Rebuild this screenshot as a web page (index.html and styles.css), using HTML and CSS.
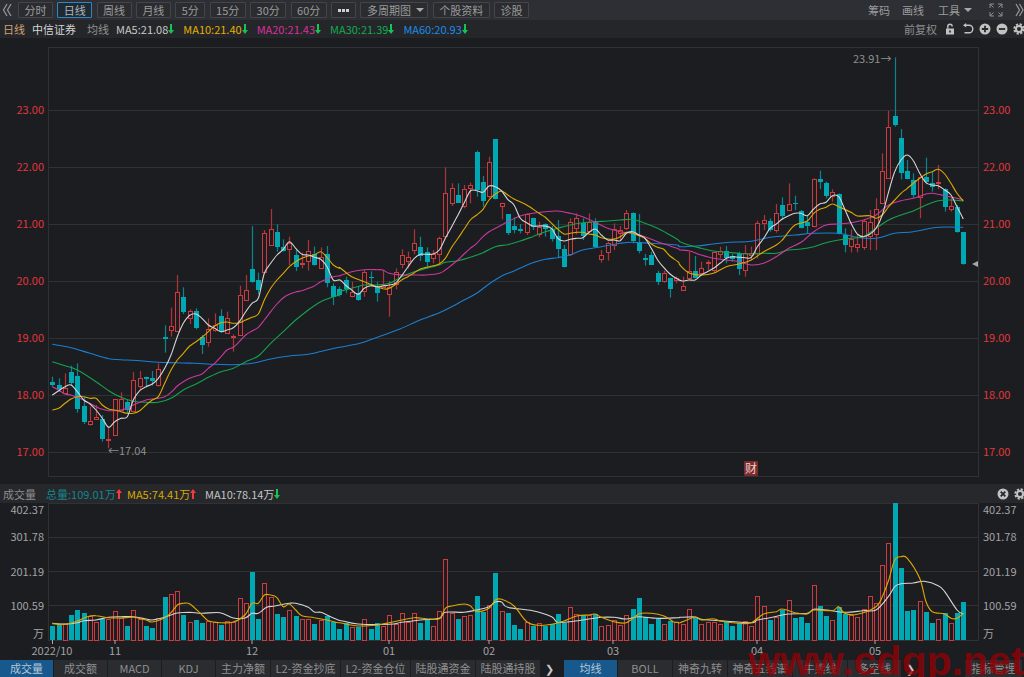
FILE: index.html
```html
<!DOCTYPE html>
<html lang="zh-CN">
<head>
<meta charset="utf-8">
<title>中信证券 日线</title>
<link rel="stylesheet" href="styles.css">
</head>
<body>
<div class="app">
  <header class="toolbar">
    <svg class="chev" viewBox="0 0 10 16" width="10" height="16"><path d="M5 2L1.5 8L5 14M9 2L5.5 8L9 14"/></svg>
    <button class="btn">分时</button>
    <button class="btn btn-active">日线</button>
    <button class="btn">周线</button>
    <button class="btn">月线</button>
    <button class="btn">5分</button>
    <button class="btn">15分</button>
    <button class="btn">30分</button>
    <button class="btn">60分</button>
    <button class="btn btn-dots" aria-label="更多"><svg class="dots" viewBox="0 0 11 3" width="11" height="3"><path d="M0 0h3v3H0zM4 0h3v3H4zM8 0h3v3H8z"/></svg></button>
    <button class="btn btn-caret">多周期图<i class="caret"></i></button>
    <button class="btn">个股资料</button>
    <button class="btn">诊股</button>
    <div class="tool-right">
      <span>筹码</span>
      <span>画线</span>
      <span class="tool-menu">工具<i class="caret"></i></span>
      <svg class="ico-expand" viewBox="0 0 14 14" width="14" height="14"><path d="M1 5V1h4M9 1h4v4M13 9v4H9M5 13H1V9M1 1l3.5 3.5M13 1L9.5 4.5M13 13L9.5 9.5M1 13l3.5-3.5"/></svg>
      <svg class="chev chev-right" viewBox="0 0 9 16" width="9" height="16"><path d="M1 2L4.5 8L1 14M4.5 2L8 8L4.5 14"/></svg>
    </div>
  </header>

  <div class="legend">
    <span class="tag-period">日线</span>
    <span class="tag-name">中信证券</span>
    <span class="tag-ma">均线</span>
    <span class="ma c-white">MA5:21.08<i class="arr arr-down"></i></span>
    <span class="ma c-yellow">MA10:21.40<i class="arr arr-down"></i></span>
    <span class="ma c-magenta">MA20:21.43<i class="arr arr-down"></i></span>
    <span class="ma c-green">MA30:21.39<i class="arr arr-down"></i></span>
    <span class="ma c-blue">MA60:20.93<i class="arr arr-down"></i></span>
    <div class="legend-right">
      <span class="fq">前复权</span>
      <svg class="ico ico-lock" viewBox="0 0 12 12" width="12" height="12"><path class="fill" d="M2 5.5h8v6H2z"/><path class="line" d="M3.8 5.5V3.4a2.2 2.2 0 0 1 4.4 0"/><rect class="hole" x="5.2" y="7.5" width="1.6" height="2"/></svg>
      <svg class="ico" viewBox="0 0 12 12" width="12" height="12"><path class="line" d="M3 2.2h4a3.6 3.6 0 0 1 0 7.6H2.5"/><path class="fill" d="M4.2 0v4.4L1 2.2z"/></svg>
      <svg class="ico" viewBox="0 0 12 12" width="12" height="12"><circle class="fill" cx="6" cy="6" r="5.5"/><path class="hole-line" d="M6 2.8v6.4M2.8 6h6.4"/></svg>
      <svg class="ico" viewBox="0 0 12 12" width="12" height="12"><circle class="fill" cx="6" cy="6" r="5.5"/><path class="hole-line" d="M2.8 6h6.4"/></svg>
      <svg class="ico" viewBox="0 0 12 12" width="12" height="12"><circle class="gear-teeth" cx="6" cy="6" r="4.7"/><circle class="gear-ring" cx="6" cy="6" r="3"/></svg>
    </div>
  </div>

  <svg id="price" class="pane pane-price" viewBox="0 38 1024 446" width="1024" height="446">
    <g class="grid">
      <path d="M48 47H978V476H48Z"/>
      <path d="M48 110H978M48 167H978M48 224H978M48 281H978M48 338H978M48 395H978M48 452H978"/>
    </g>
    <g id="candles"></g>
    <g id="malines"></g>
    <g class="axis-red">
      <text x="44" y="114" text-anchor="end">23.00</text>
      <text x="44" y="171" text-anchor="end">22.00</text>
      <text x="44" y="228" text-anchor="end">21.00</text>
      <text x="44" y="285" text-anchor="end">20.00</text>
      <text x="44" y="342" text-anchor="end">19.00</text>
      <text x="44" y="399" text-anchor="end">18.00</text>
      <text x="44" y="456" text-anchor="end">17.00</text>
      <text x="983" y="114">23.00</text>
      <text x="983" y="171">22.00</text>
      <text x="983" y="228">21.00</text>
      <text x="983" y="285">20.00</text>
      <text x="983" y="342">19.00</text>
      <text x="983" y="399">18.00</text>
      <text x="983" y="456">17.00</text>
    </g>
    <text class="note" x="108" y="455">←17.04</text>
    <text class="note" x="853" y="63">23.91→</text>
    <path class="mark" d="M972 264l6-3v6z"/>
    <rect class="cai-box" x="744" y="461" width="14" height="15" rx="1"/>
    <text class="cai" x="751" y="473" text-anchor="middle">财</text>
  </svg>

  <div class="vol-head">
    <span class="vol-name">成交量</span>
    <span class="vol-total">总量:109.01万<i class="arr arr-up"></i></span>
    <span class="vol-ma5">MA5:74.41万<i class="arr arr-up"></i></span>
    <span class="vol-ma10">MA10:78.14万<i class="arr arr-down"></i></span>
    <div class="vol-right">
      <svg class="ico" viewBox="0 0 12 12" width="12" height="12"><circle class="fill" cx="6" cy="6" r="5.5"/><path class="hole-line" d="M3.7 3.7l4.6 4.6M8.3 3.7l-4.6 4.6"/></svg>
      <svg class="ico" viewBox="0 0 12 12" width="12" height="12"><circle class="gear-teeth" cx="6" cy="6" r="4.7"/><circle class="gear-ring" cx="6" cy="6" r="3"/></svg>
    </div>
  </div>

  <svg id="volume" class="pane pane-vol" viewBox="0 503 1024 157" width="1024" height="157">
    <g class="grid">
      <path d="M48 503.5H978V640.5H48Z"/>
      <path d="M48 537.5H978M48 571.5H978M48 605.5H978"/>
    </g>
    <g id="bars"></g>
    <g id="vollines"></g>
    <g class="axis-gray">
      <text x="44" y="514" text-anchor="end">402.37</text>
      <text x="44" y="541" text-anchor="end">301.78</text>
      <text x="44" y="576" text-anchor="end">201.19</text>
      <text x="44" y="610" text-anchor="end">100.59</text>
      <text x="44" y="638" text-anchor="end">万</text>
      <text x="983" y="514">402.37</text>
      <text x="983" y="541">301.78</text>
      <text x="983" y="576">201.19</text>
      <text x="983" y="610">100.59</text>
      <text x="983" y="638">万</text>
      <text x="52" y="655" text-anchor="middle">2022/10</text>
      <text x="115" y="655" text-anchor="middle">11</text>
      <text x="252" y="655" text-anchor="middle">12</text>
      <text x="389" y="655" text-anchor="middle">01</text>
      <text x="489" y="655" text-anchor="middle">02</text>
      <text x="613" y="655" text-anchor="middle">03</text>
      <text x="757" y="655" text-anchor="middle">04</text>
      <text x="875" y="655" text-anchor="middle">05</text>
    </g>
    <path class="ticks" d="M52.5 640v4M115 640v4M252 640v4M389 640v4M489 640v4M613 640v4M757 640v4M875 640v4"/>
  </svg>

  <nav class="tabs">
    <span class="tab tab-active">成交量</span>
    <span class="tab">成交额</span>
    <span class="tab">MACD</span>
    <span class="tab">KDJ</span>
    <span class="tab tab-w">主力净额</span>
    <span class="tab tab-l2">L2-资金抄底</span>
    <span class="tab tab-l2">L2-资金仓位</span>
    <span class="tab tab-lg">陆股通资金</span>
    <span class="tab tab-lg">陆股通持股</span>
    <span class="tab-next">❯</span>
    <span class="tab tab-active">均线</span>
    <span class="tab tab-w">BOLL</span>
    <span class="tab tab-w">神奇九转</span>
    <span class="tab tab-lg">神奇五线谱</span>
    <span class="tab tab-w">牛熊线</span>
    <span class="tab">多空线</span>
    <span class="tab-next">❯</span>
    <span class="tab tab-manage">指标管理</span>
  </nav>

  <div class="watermark">www.cdgp.net</div>
</div>
<script src="chart.js"></script>
</body>
</html>
```

FILE: styles.css
```css
* { box-sizing: border-box; }
html, body { margin: 0; padding: 0; height: 100%; background: #1c1d21; overflow: hidden; }
body { font-family: "Noto Sans CJK SC", "Liberation Sans", sans-serif; font-size: 11px; color: #9b9b9b; }
.app { position: relative; width: 1024px; height: 677px; display: flex; flex-direction: column; overflow: hidden; }

.toolbar { height: 20px; flex: none; display: flex; align-items: center; gap: 4.3px; background: #2d2f34; padding-left: 2px; }
.chev { flex: none; fill: none; stroke: #9a9a9a; stroke-width: 1.2; margin-right: 1.7px; }
.btn { height: 16px; padding: 0 5.5px; font: inherit; line-height: 14px; color: #9b9b9b; background: #2a2c30; border: 1px solid #43454a; border-radius: 1px; display: flex; align-items: center; gap: 5px; white-space: nowrap; }
.btn-active { color: #aeb6bc; background: #202a33; border-color: #2f86c5; }
.btn-dots { width: 25px; justify-content: center; padding: 0; }
.dots { fill: #d0d0d0; }
.btn-caret { width: 68px; }
.caret { display: inline-block; width: 0; height: 0; border: 4px solid transparent; border-top: 4px solid #a8a8a8; border-bottom: 0; }
.tool-right { margin-left: auto; display: flex; align-items: center; gap: 12px; color: #9b9b9b; }
.tool-menu { display: flex; align-items: center; gap: 4px; margin-left: 2px; margin-right: 5px; }
.ico-expand { fill: none; stroke: #8f8f8f; stroke-width: 1; }
.chev-right { margin: 0; }

.legend { height: 18px; flex: none; display: flex; align-items: center; background: #24262a; padding-left: 3px; }
.tag-period { color: #cfa274; width: 29px; }
.tag-name { color: #d4d4d4; width: 55px; }
.tag-ma { color: #929292; width: 29px; }
.ma { display: flex; align-items: center; margin-right: 9px; }
.c-white { color: #c9c9c9; }
.c-yellow { color: #e6b000; }
.c-magenta { color: #db2f9c; }
.c-green { color: #12ab50; }
.c-blue { color: #1c8ce6; }
.arr { display: inline-block; flex: none; width: 6px; height: 10px; position: relative; }
.arr::before { content: ""; position: absolute; left: 2px; width: 2px; height: 7px; }
.arr::after { content: ""; position: absolute; left: 0; width: 0; height: 0; border-left: 3px solid transparent; border-right: 3px solid transparent; }
.arr-down::before { top: 0; background: #14c455; }
.arr-down::after { bottom: 0; border-top: 4px solid #14c455; }
.arr-up::before { bottom: 0; background: #f53a3e; }
.arr-up::after { top: 0; border-bottom: 4px solid #f53a3e; }
.legend-right { margin-left: auto; display: flex; align-items: center; gap: 5px; margin-right: -1px; }
.fq { color: #8f8f8f; margin-right: 2px; }
.ico { flex: none; }
.ico-lock { margin-right: 1px; }
.ico .fill { fill: #c2c2c2; }
.ico .line { fill: none; stroke: #c2c2c2; stroke-width: 1.4; }
.ico .hole { fill: #24262a; }
.ico .hole-line { fill: none; stroke: #26282c; stroke-width: 1.8; }
.ico .gear-teeth { fill: none; stroke: #c2c2c2; stroke-width: 2; stroke-dasharray: 2.2 1.5; }
.ico .gear-ring { fill: none; stroke: #c2c2c2; stroke-width: 2; }

.pane { display: block; flex: none; overflow: visible; font-family: "Noto Sans CJK SC", "Liberation Sans", sans-serif; font-size: 11px; }
.grid path { fill: none; stroke: #2f3135; stroke-width: 1; shape-rendering: crispEdges; }
.axis-red text { fill: #e1373a; }
.axis-gray text { fill: #a3a3a3; }
.note { fill: #8e8e8e; font-size: 11px; }
.mark { fill: #a8a8a8; }
.cai-box { fill: #7c2b2b; }
.cai { fill: #e3cfcf; font-size: 12px; }
.ticks { stroke: #a8a8a8; fill: none; }
.wick-up { stroke: #ad3337; stroke-width: 1.2; }
.wick-down { stroke: #0a8590; stroke-width: 1.2; }
.body-up { fill: #1c1d21; stroke: #cf3a3f; stroke-width: 1; shape-rendering: crispEdges; }
.body-down { fill: #00a8b4; shape-rendering: crispEdges; }
.ma-line { fill: none; stroke-width: 1.1; stroke-linejoin: round; }
.s-white { stroke: #d5d5d5; }
.s-yellow { stroke: #dca900; }
.s-magenta { stroke: #c93a9c; }
.s-green { stroke: #15a24e; }
.s-blue { stroke: #1b7fd0; }

.vol-head { height: 19px; flex: none; display: flex; align-items: center; background: #26282c; padding-left: 3px; }
.vol-name { color: #8f8f8f; width: 43px; }
.vol-total { color: #16858e; display: flex; align-items: center; width: 81px; }
.vol-ma5 { color: #dba800; display: flex; align-items: center; width: 78px; }
.vol-ma10 { color: #c4c4c4; display: flex; align-items: center; }
.vol-right { margin-left: auto; display: flex; gap: 5px; margin-right: -2px; }

.tabs { height: 17px; flex: none; display: flex; align-items: stretch; background: #1c1d21; }
.tab { width: 54px; text-align: center; line-height: 16px; background: #2a2c30; color: #8f8f8f; border-right: 1px solid #1c1d21; white-space: nowrap; }
.tab-active { background: #17598c; color: #b6c6d4; }
.tab-w { width: 55px; }
.tab-l2 { width: 70px; }
.tab-lg { width: 65px; }
.tab-next { width: 23px; line-height: 16px; padding-left: 4px; color: #c8c8c8; }
.tab-manage { width: 58px; margin-left: auto; margin-right: 1px; }

.watermark { position: absolute; left: 748px; top: 637px; font-family: "Liberation Sans", sans-serif; font-size: 41px; line-height: 48px; font-weight: bold; color: rgba(146, 2, 6, .8); white-space: nowrap; pointer-events: none; }
```

FILE: chart.js
```js
var NS = "http://www.w3.org/2000/svg";
function el(parent, name, attrs) {
  var n = document.createElementNS(NS, name);
  for (var k in attrs) n.setAttribute(k, attrs[k]);
  parent.appendChild(n);
  return n;
}
function cx(i) { return 52.33 + 6.24 * i; }

// [up(1)/down(0), wick top, body top, body bottom, wick bottom] in crop coordinates
var A = [[0,530,545,555,560],[0,535,555,568,575],[1,520,563,578,580],[0,497,516,550,555],[0,490,527,625,638],[0,590,618,665,672],[1,620,664,673,677],[1,615,650,656,657],[0,645,657,718,725],[1,680,717,720,745],[1,598,598,707,707],[1,577,598,632,632],[0,600,607,632,640],[1,516,540,632,635],[1,513,535,558,570],[0,530,532,537,562],[0,513,534,543,557],[1,490,508,557,560],[0,376,412,418,458],[1,323,377,388,410],[1,225,276,394,395],[0,262,292,338,342],[1,328,332,352,372],[0,325,334,386,388],[0,405,412,437,462],[1,355,386,425,440],[1,340,376,392,395],[0,328,348,395,398],[1,335,353,397,400],[1,403,408,412,455],[1,257,286,405,405],[1,225,271,302,303],[0,78,208,248,248],[0,218,241,272,283],[1,90,100,217,218],[1,27,88,135,137],[0,73,96,142,155],[0,118,140,153,155],[1,110,130,148,195],[0,150,166,202,213],[1,158,188,190,205],[1,120,152,182,212],[0,140,163,197,197],[1,142,172,206,208],[0,138,163,250,262],[0,250,257,290,315]];
var B = [[0,470,478,497,500],[0,440,450,476,490],[1,455,485,497,502],[0,468,490,510,512],[1,420,427,485,500],[0,424,440,444,470],[0,455,472,490,515],[1,420,465,470,470],[1,453,470,490,560],[1,415,425,460,478],[1,358,376,402,415],[1,365,382,394,415],[1,298,340,360,373],[0,320,350,378,393],[0,352,365,394,415],[1,360,373,385,400],[1,320,323,372,405],[1,112,190,320,320],[1,160,173,218,228],[0,160,195,218,218],[1,165,176,227,235],[1,158,166,175,220],[0,62,67,180,200],[0,138,156,212,230],[1,80,96,198,205],[0,27,28,208,208],[1,218,220,230,268],[0,252,252,308,315],[0,262,288,301,310],[0,282,296,303,310],[1,250,252,307,315],[0,263,263,290,300],[1,275,292,313,322],[0,280,282,296,320],[0,287,296,325,335],[0,270,318,357,382],[0,345,357,412,412],[1,265,275,372,378],[1,250,265,296,313],[0,265,279,318,330],[1,250,277,305,310],[0,265,272,350,352],[1,360,376,388,398],[1,335,340,367,392],[1,280,298,345,360],[1,288,301,310,330],[1,240,250,296,300],[0,247,250,335,340],[0,252,337,365,370],[0,372,385,392,407],[0,365,375,404,405],[0,422,430,456,465],[1,422,430,453,458],[0,443,445,477,503],[1,440,445,450,460]];
var C = [[1,680,707,718,720],[1,605,663,685,690],[0,618,663,683,685],[1,635,655,670,672],[1,630,637,639,660],[1,605,607,660,668],[1,590,604,614,625],[0,588,604,625,640],[0,612,618,628,635],[0,605,608,655,675],[1,585,610,662,680],[1,590,608,615,630],[1,512,520,610,625],[1,495,510,520,540],[0,505,512,540,545],[1,462,490,540,548],[0,442,466,500,510],[1,400,461,478,480],[0,437,460,462,480],[0,480,482,532,535],[0,498,517,528,550],[1,385,387,528,532],[0,362,388,398,417],[0,395,399,438,445],[1,418,427,440,455],[0,430,432,552,553],[0,535,555,585,607],[1,538,568,590,607],[1,555,583,592,607],[1,508,512,590,600],[1,480,517,560,600],[1,445,476,550,600],[1,310,362,458,460],[1,182,232,385,385],[0,22,199,226,230],[0,237,264,368,388],[0,330,362,385,388],[0,370,391,436,443],[1,380,382,443,505],[0,323,382,397,403],[0,365,398,410,425],[1,345,395,398,418],[0,415,418,473,485],[1,440,468,478,485],[0,465,472,548,548],[0,547,547,644,644]];

var cg = document.getElementById("candles");
function drawBody(parent, up, c, top, h) {
  el(parent, "rect", {
    x: up ? c - 1.5 : c - 2,
    y: Math.round(top) + (up ? 0.5 : 0),
    width: up ? 4 : 5,
    height: Math.max(1, Math.round(h)),
    "class": up ? "body-up" : "body-down"
  });
}
function drawCandles(list, start, oy) {
  list.forEach(function (c, n) {
    var r = Math.round(cx(start + n));
    var wt = oy + c[1] / 3, bt = oy + c[2] / 3, bb = oy + c[3] / 3, wb = oy + c[4] / 3;
    el(cg, "line", { x1: r + 0.5, x2: r + 0.5, y1: wt, y2: wb, "class": c[0] ? "wick-up" : "wick-down" });
    drawBody(cg, c[0], r, bt, bb - bt);
  });
}
drawCandles(A, 0, 200);
drawCandles(B, 46, 130);
drawCandles(C, 101, 50);

function smooth(p) {
  var d = "M" + p[0][0].toFixed(1) + " " + p[0][1].toFixed(1);
  for (var i = 0; i < p.length - 1; i++) {
    var a = p[Math.max(0, i - 1)], b = p[i], c = p[i + 1], e = p[Math.min(p.length - 1, i + 2)];
    d += "C" + (b[0] + (c[0] - a[0]) / 6).toFixed(1) + " " + (b[1] + (c[1] - a[1]) / 6).toFixed(1) + " " +
      (c[0] - (e[0] - b[0]) / 6).toFixed(1) + " " + (c[1] - (e[1] - b[1]) / 6).toFixed(1) + " " +
      c[0].toFixed(1) + " " + c[1].toFixed(1);
  }
  return d;
}
function series(groups) {
  var out = [];
  groups.forEach(function (g) {
    var ox = g[0], oy = g[1], v = g[2];
    for (var i = 0; i < v.length; i += 2) out.push([ox + v[i] / 3, oy + v[i + 1] / 3]);
  });
  return out;
}

var P3 = [0, 200], P4 = [340, 130], P5 = [680, 50], V6 = [0, 480], V7 = [340, 480], V8 = [680, 480];
function G(o, v) { return [o[0], o[1], v]; }

var mg = document.getElementById("malines");
var lines = [
  ["s-blue", [G(P3,[157,433,213,443,270,460,326,476,363,479,419,482,475,487,532,488,588,490,644,493,700,494,756,490,812,477,868,468,925,463,981,450,1018,442]),G(P4,[60,640,120,619,180,597,240,570,298,548,335,530,372,510,410,490,447,462,485,438,522,423,578,398,616,388,653,383,691,375,728,360,784,350,841,340,878,337,934,340,1010,345]),G(P5,[0,590,50,588,100,582,150,577,214,574,270,562,345,555,401,550,476,550,532,562,588,565,644,550,700,545,775,532,850,532])]],
  ["s-green", [G(P3,[157,485,195,497,232,510,288,545,326,572,363,592,400,604,438,607,475,607,513,595,550,570,588,552,625,532,663,515,700,505,737,485,775,468,812,430,850,395,887,360,925,330,962,305,1000,290,1018,285]),G(P4,[0,485,35,475,73,465,110,465,148,460,185,440,223,425,260,415,298,405,316,397,354,392,391,382,429,368,466,350,503,344,541,333,578,320,616,305,653,295,691,285,728,278,766,275,803,273,841,270,878,268,915,280,953,295,990,315,1015,330]),G(P5,[0,575,26,585,64,595,101,603,139,607,176,610,214,612,251,610,289,610,326,600,363,597,401,590,438,578,476,570,513,565,550,560,588,535,626,510,663,495,700,483,738,465,775,452,813,450,850,453])]],
  ["s-magenta", [G(P3,[157,560,176,570,195,582,213,585,232,592,251,600,270,610,288,620,307,628,326,632,344,632,363,630,382,625,400,615,419,607,438,600,457,597,475,595,494,590,513,577,532,558,550,545,569,535,588,528,606,522,625,505,644,490,663,470,681,450,700,442,718,425,737,405,756,393,775,382,793,360,812,335,831,312,850,293,868,283,887,276,906,272,925,265,943,258,962,245,981,237,1000,230,1018,227]),G(P4,[0,437,35,425,73,419,110,419,129,420,148,430,185,435,223,435,260,435,298,430,316,420,335,405,354,390,372,372,391,355,410,340,429,320,447,305,466,295,485,285,503,275,541,258,578,250,616,245,653,243,691,250,728,260,766,277,803,295,841,305,878,310,915,320,953,335,990,348,1015,356]),G(P5,[0,600,26,602,64,615,101,625,139,630,176,635,214,645,251,640,289,620,326,595,363,577,401,545,438,525,476,522,513,518,550,510,588,495,626,465,663,452,700,445,738,432,757,430,794,437,831,445,850,450])]],
  ["s-yellow", [G(P3,[157,630,176,625,195,610,213,597,232,590,251,590,270,595,288,595,307,615,326,627,344,630,363,635,382,640,400,640,419,632,438,615,457,600,475,590,494,550,513,510,532,480,550,460,569,438,588,425,606,412,625,395,644,378,663,368,681,366,700,370,718,368,737,360,756,352,775,342,793,300,812,265,831,240,850,220,868,200,887,185,906,175,925,168,943,165,962,155,981,172,1000,195,1018,205]),G(P4,[0,413,35,440,73,455,110,470,129,476,148,475,185,450,204,440,223,428,241,417,260,412,298,402,316,385,335,352,354,325,372,298,391,270,410,255,429,238,447,210,466,192,485,183,503,195,522,207,560,225,597,250,616,262,635,280,653,297,672,312,691,310,710,307,728,307,747,312,766,315,784,323,803,327,822,327,841,320,859,307,878,310,897,317,915,325,934,342,953,352,971,358,990,378,1015,396]),G(P5,[0,645,26,668,64,675,100,670,139,650,176,642,214,630,251,605,289,585,307,570,326,545,345,525,382,513,401,490,419,478,438,472,457,462,476,470,513,487,532,498,569,497,588,505,607,495,626,470,644,450,663,430,682,415,700,400,719,385,738,372,757,365,775,358,794,372,813,400,831,430,850,453])]],
  ["s-white", [G(P3,[157,585,176,572,195,560,213,555,232,575,251,600,270,612,288,630,307,655,326,682,344,665,363,655,382,650,400,600,419,572,438,560,457,552,475,535,494,505,513,465,532,410,550,370,569,346,588,342,606,355,625,375,644,385,663,395,681,390,700,383,718,365,737,335,756,310,775,295,793,220,812,190,831,165,850,148,868,125,887,145,906,163,925,165,943,172,962,178,981,200,1000,240]),G(P4,[0,450,16,465,35,480,54,493,73,475,92,467,110,470,129,468,148,465,166,460,185,437,204,410,223,385,241,373,260,373,279,372,298,360,316,325,335,290,354,255,372,220,391,183,410,182,429,187,447,168,466,170,485,183,503,208,522,225,541,265,560,278,578,288,597,288,616,288,635,296,653,325,672,333,691,328,710,325,728,323,747,307,766,297,784,315,803,330,822,330,841,332,859,310,878,305,897,315,915,325,934,355,953,390,971,412,990,432,1009,445]),G(P5,[7,693,26,690,45,690,64,675,82,665,101,655,120,640,139,625,157,620,176,622,195,623,214,622,232,590,251,565,270,535,289,522,307,507,326,497,345,490,363,490,382,497,401,477,419,462,438,457,457,437,476,440,494,477,513,520,532,552,550,560,569,553,588,535,607,495,626,425,644,365,663,330,682,315,700,332,719,370,738,398,757,405,775,407,794,420,813,435,831,470,850,507])]]
];
lines.forEach(function (l) { el(mg, "path", { d: smooth(series(l[1])), "class": "ma-line " + l[0] }); });

// Volume bars: sign (1 up, 0 down) and top, crop coordinates relative to y=480
var V = [[0,438],[0,432],[1,432],[0,406],[0,390],[0,400],[1,408],[1,427],[0,418],[1,418],[1,393],[1,413],[0,438],[1,391],[1,418],[0,438],[0,444],[1,414],[0,350],[1,343],[1,332],[0,404],[1,427],[0,420],[0,430],[1,423],[1,427],[0,435],[1,424],[1,427],[1,353],[1,370],[0,276],[0,417],[1,308],[1,351],[0,401],[0,412],[1,390],[0,407],[1,417],[1,417],[0,433],[1,420],[0,408],[0,427],[0,447],[0,430],[1,442],[0,440],[1,418],[0,447],[0,428],[1,437],[1,406],[1,432],[1,400],[1,427],[1,400],[0,428],[0,420],[1,438],[1,393],[1,238],[1,398],[0,417],[1,409],[1,405],[0,348],[0,395],[1,375],[0,280],[1,393],[0,399],[0,436],[0,447],[1,426],[0,438],[1,430],[0,437],[0,433],[0,401],[0,428],[1,380],[1,403],[0,405],[1,405],[0,403],[1,438],[1,436],[1,420],[1,436],[1,404],[0,388],[0,355],[0,410],[0,433],[0,415],[1,433],[0,422],[1,427],[1,432],[1,388],[0,415],[1,433],[1,425],[1,425],[1,433],[0,425],[0,438],[0,430],[1,422],[1,438],[1,349],[1,378],[0,420],[1,410],[0,390],[1,359],[0,415],[0,412],[0,428],[1,314],[0,377],[0,409],[1,421],[0,380],[0,403],[1,405],[1,411],[1,388],[1,349],[1,370],[1,255],[1,190],[0,70],[0,265],[0,394],[0,391],[1,364],[0,396],[0,428],[1,418],[0,400],[1,428],[0,400],[0,367]];
var bg = document.getElementById("bars");
V.forEach(function (v, i) {
  var top = 480 + v[1] / 3;
  drawBody(bg, v[0], Math.round(cx(i)), top, 640 - top);
});

var vg = document.getElementById("vollines");
var vlines = [
  ["s-white", [G(V6,[157,430,195,432,232,428,251,422,288,420,325,412,363,410,400,410,438,417,457,420,494,412,513,405,532,399,570,397,606,400,660,398,700,414,735,414,756,400,775,400,800,382,825,378,868,370,887,370,925,382,943,396,962,397,981,405,1015,420]),G(V7,[4,422,54,432,148,433,185,427,241,420,298,415,316,397,372,397,410,390,447,380,466,366,485,366,503,382,578,392,635,410,653,427,700,424,747,417,784,412,822,412,859,417,897,410,953,415,1015,413]),G(V8,[0,412,45,411,64,418,120,422,214,428,232,420,270,413,326,402,382,400,401,388,440,390,494,397,550,392,588,390,625,350,644,320,663,311,700,309,732,304,775,317,794,335,831,390,850,402])]],
  ["s-yellow", [G(V6,[157,431,195,433,232,423,262,410,288,407,325,413,363,414,400,412,438,420,457,426,494,413,513,398,532,375,550,370,570,372,606,405,625,422,660,428,700,426,735,405,756,370,775,370,793,345,812,345,830,352,850,380,868,372,887,390,906,407,943,413,981,420,1015,428]),G(V7,[4,429,54,438,110,435,148,428,185,420,223,413,260,416,298,416,316,385,335,378,372,372,391,377,410,395,447,385,466,360,485,358,522,378,560,425,597,436,635,433,672,423,710,408,747,405,766,402,784,412,822,425,859,428,897,402,934,400,972,408,1000,425,1015,427]),G(V8,[0,428,45,412,64,420,100,416,120,423,176,430,214,428,251,402,289,395,307,387,345,398,382,402,401,390,457,392,476,380,494,400,532,403,588,380,607,350,626,300,644,240,663,230,682,235,719,295,738,365,757,395,794,402,813,415,831,415,850,400])]]
];
vlines.forEach(function (l) { el(vg, "path", { d: smooth(series(l[1])), "class": "ma-line " + l[0] }); });
```
